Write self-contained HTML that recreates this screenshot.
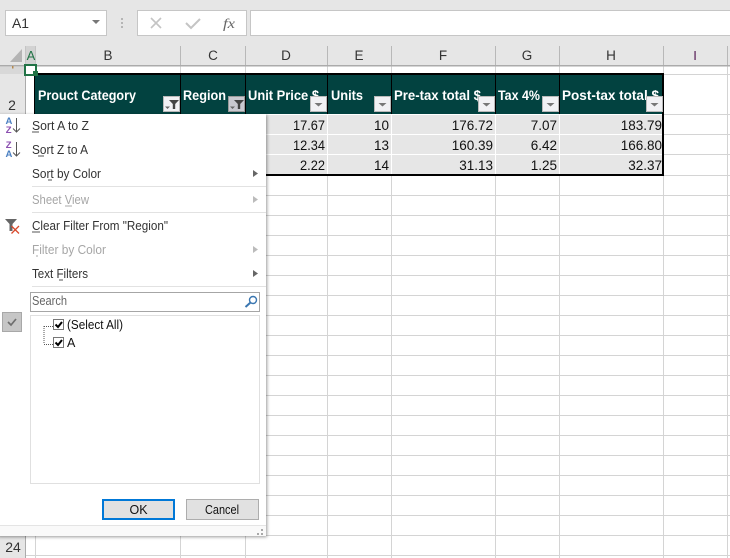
<!DOCTYPE html>
<html><head><meta charset="utf-8"><style>
html,body{margin:0;padding:0;width:730px;height:558px;overflow:hidden;background:#fff}
svg{display:block;font-family:"Liberation Sans",sans-serif}
.h{fill:#fff;font-weight:bold;font-size:13.5px}
.d{fill:#111;font-size:13.5px;text-anchor:end}
.c{fill:#333;font-size:13.5px;text-anchor:middle}
.m{fill:#333;font-size:12.5px}
.g{fill:#a6a6a6;font-size:12.5px}
</style></head><body>
<svg width="730" height="558" viewBox="0 0 730 558" xmlns="http://www.w3.org/2000/svg">
<defs>
<g id="btn"><rect x="0.5" y="0.5" width="16" height="15" fill="#f1f1f4" stroke="#b9b9b9"/><path d="M4.500 7h8l-4 3.500z" fill="#777"/></g>
<g id="fil"><path d="M6 4h10l-3.800 4v5h-2.400v-5z" fill="#444"/><path d="M2 10.500h5l-2.500 2.500z" fill="#666"/></g>
<filter id="sh" x="-5%" y="-5%" width="110%" height="110%"><feDropShadow dx="1" dy="1" stdDeviation="1.500" flood-color="#000" flood-opacity=".4"/></filter>
</defs>
<rect width="730" height="66" fill="#e6e6e6"/>
<rect x="0" y="66" width="25" height="492" fill="#e6e6e6"/>
<!-- grid -->
<g stroke="#d4d4d4" fill="none">
<path d="M35.500 66V558M180.500 66V558M245.500 66V558M327.500 66V558M391.500 66V558M495.500 66V558M559.500 66V558M663.500 66V558M727.500 66V558"/>
<path d="M25 74.500H730M25 114.500H730M25 134.500H730M25 154.500H730M25 175.500H730M25 195.500H730M25 215.500H730M25 235.500H730M25 255.500H730M25 275.500H730M25 295.500H730M25 315.500H730M25 335.500H730M25 355.500H730M25 375.500H730M25 395.500H730M25 415.500H730M25 435.500H730M25 455.500H730M25 475.500H730M25 495.500H730M25 515.500H730M25 535.500H730M25 555.500H730"/>
</g>
<!-- formula bar -->
<rect x="5.500" y="10.500" width="101" height="25" fill="#fff" stroke="#c6c6c6"/>
<text x="12" y="28" font-size="14" fill="#333" textLength="17" lengthAdjust="spacingAndGlyphs">A1</text>
<path d="M92 20h8l-4 4z" fill="#777"/>
<g fill="#b5b5b5"><rect x="121" y="18" width="2" height="2"/><rect x="121" y="22" width="2" height="2"/><rect x="121" y="26" width="2" height="2"/></g>
<rect x="137.500" y="10.500" width="109" height="25" fill="#fff" stroke="#c6c6c6"/>
<path d="M151 18l10 10M161 18l-10 10" stroke="#c4c4c4" stroke-width="1.600" fill="none"/>
<path d="M186 23l5 5 9-9" stroke="#c4c4c4" stroke-width="2" fill="none"/>
<text x="223" y="28" font-size="14" font-family="Liberation Serif" font-style="italic" fill="#666" textLength="12" lengthAdjust="spacingAndGlyphs">fx</text>
<rect x="250.500" y="10.500" width="480" height="25" fill="#fff" stroke="#c6c6c6"/>
<!-- column headers -->
<path d="M10 62L22 49V62z" fill="#b4b4b4"/>
<rect x="25" y="46" width="10" height="19" fill="#d2d2d2"/>
<path d="M180.500 46V65M245.500 46V65M327.500 46V65M391.500 46V65M495.500 46V65M559.500 46V65M663.500 46V65M727.500 46V65" stroke="#b8b8b8"/>
<path d="M25.500 46V65M35.500 46V65" stroke="#c4c4c4"/>
<rect x="0" y="65" width="730" height="1.500" fill="#ababab"/>
<text x="31" y="60" font-size="13" fill="#217346" text-anchor="middle">A</text>
<text class="c" x="108" y="60">B</text><text class="c" x="213" y="60">C</text><text class="c" x="286" y="60">D</text><text class="c" x="359" y="60">E</text><text class="c" x="443" y="60">F</text><text class="c" x="527" y="60">G</text><text class="c" x="611" y="60">H</text><text x="695" y="60" font-size="13" fill="#551a55" text-anchor="middle">I</text>
<!-- row headers -->
<rect x="0" y="67" width="25" height="7" fill="#d8d8d8"/>
<rect x="12" y="66" width="1.500" height="2.500" fill="#b58a50"/>
<rect x="25" y="66" width="1" height="492" fill="#ababab"/>
<text x="12" y="110" font-size="14" fill="#333" text-anchor="middle">2</text>
<!-- table -->
<rect x="34" y="73" width="630" height="41" fill="#024240"/>
<rect x="34" y="115" width="630" height="60" fill="#e6e6e6"/>
<path d="M36 134.500H662M36 154.500H662M327.500 115V174M391.500 115V174M495.500 115V174M559.500 115V174M245.500 115V174" stroke="#fff"/>
<path d="M34 114.500H664" stroke="#fff"/>
<path d="M180.500 74V114M245.500 74V114M327.500 74V114M391.500 74V114M495.500 74V114M559.500 74V114" stroke="#000"/>
<rect x="34" y="73" width="630" height="2" fill="#000"/><rect x="34" y="73" width="1" height="41" fill="#000"/>
<rect x="662" y="73" width="2" height="103" fill="#000"/><rect x="34" y="174" width="630" height="2" fill="#000"/>
<text class="h" x="38" y="100" textLength="98" lengthAdjust="spacingAndGlyphs">Prouct Category</text>
<text class="h" x="183" y="100" textLength="43" lengthAdjust="spacingAndGlyphs">Region</text>
<text class="h" x="248" y="100" textLength="71" lengthAdjust="spacingAndGlyphs">Unit Price $</text>
<text class="h" x="331" y="100" textLength="32" lengthAdjust="spacingAndGlyphs">Units</text>
<text class="h" x="394" y="100" textLength="87" lengthAdjust="spacingAndGlyphs">Pre-tax total $</text>
<text class="h" x="498" y="100" textLength="42" lengthAdjust="spacingAndGlyphs">Tax 4%</text>
<text class="h" x="562" y="100" textLength="97" lengthAdjust="spacingAndGlyphs">Post-tax total $</text>
<g transform="translate(163,96)"><rect x=".5" y=".5" width="16" height="15" fill="#f1f1f4" stroke="#b9b9b9"/><use href="#fil"/></g>
<g transform="translate(228,96)"><rect x=".5" y=".5" width="16" height="15" fill="#c9c9d0" stroke="#999"/><use href="#fil"/></g>
<use href="#btn" x="310" y="96"/><use href="#btn" x="374" y="96"/><use href="#btn" x="478" y="96"/><use href="#btn" x="542" y="96"/><use href="#btn" x="646" y="96"/>
<text class="d" x="325" y="130" textLength="32" lengthAdjust="spacingAndGlyphs">17.67</text><text class="d" x="325" y="150" textLength="32" lengthAdjust="spacingAndGlyphs">12.34</text><text class="d" x="325" y="170" textLength="25" lengthAdjust="spacingAndGlyphs">2.22</text>
<text class="d" x="389" y="130">10</text><text class="d" x="389" y="150">13</text><text class="d" x="389" y="170">14</text>
<text class="d" x="493" y="130">176.72</text><text class="d" x="493" y="150">160.39</text><text class="d" x="493" y="170">31.13</text>
<text class="d" x="557" y="130">7.07</text><text class="d" x="557" y="150">6.42</text><text class="d" x="557" y="170">1.25</text>
<text class="d" x="662" y="130">183.79</text><text class="d" x="662" y="150">166.80</text><text class="d" x="662" y="170">32.37</text>
<!-- selection -->
<rect x="25" y="65" width="11" height="10" fill="#fff" stroke="#217346" stroke-width="2"/>
<rect x="33" y="71" width="5" height="5" fill="#217346"/>
<!-- row 24 -->
<text x="13" y="552" font-size="14" fill="#333" text-anchor="middle">24</text>
<!-- menu -->
<rect x="-3" y="114" width="269" height="422" fill="#fff" filter="url(#sh)"/>
<path d="M32 186.500H266M32 212.500H266M32 286.500H266" stroke="#e2e2e2"/>
<path d="M0 525.500H266" stroke="#e4e4e4"/><rect x="0" y="526" width="266" height="10" fill="#f9f9f9"/>
<g fill="#a8a8a8"><rect x="261" y="529" width="2" height="2"/><rect x="257" y="533" width="2" height="2"/><rect x="261" y="533" width="2" height="2"/></g>
<!-- sort icons -->
<text x="5.500" y="124" font-size="9.500" font-weight="bold" fill="#4a7fc1">A</text>
<text x="5.800" y="133" font-size="9.500" font-weight="bold" fill="#8b4fb0">Z</text>
<path d="M16.500 118V132M13 128.500l3.500 3.500 3.500-3.500" stroke="#555" fill="none"/>
<text x="5.800" y="148" font-size="9.500" font-weight="bold" fill="#8b4fb0">Z</text>
<text x="5.500" y="157" font-size="9.500" font-weight="bold" fill="#4a7fc1">A</text>
<path d="M16.500 142V156M13 152.500l3.500 3.500 3.500-3.500" stroke="#555" fill="none"/>
<text class="m" x="32" y="130" textLength="57" lengthAdjust="spacingAndGlyphs">Sort A to Z</text>
<text class="m" x="32" y="154" textLength="56" lengthAdjust="spacingAndGlyphs">Sort Z to A</text>
<text class="m" x="32" y="178" textLength="69" lengthAdjust="spacingAndGlyphs">Sort by Color</text>
<text class="g" x="32" y="204" textLength="57" lengthAdjust="spacingAndGlyphs">Sheet View</text>
<text class="m" x="32" y="230" textLength="136" lengthAdjust="spacingAndGlyphs">Clear Filter From "Region"</text>
<text class="g" x="32" y="254" textLength="74" lengthAdjust="spacingAndGlyphs">Filter by Color</text>
<text class="m" x="32" y="278" textLength="56" lengthAdjust="spacingAndGlyphs">Text Filters</text>
<path d="M32 132H39M38 156H44M48 180H52M32 232H40M59 280H63" stroke="#555"/>
<path d="M65 206H72M36 256H38" stroke="#aaa"/>
<path d="M253 170v7l5-3.500z" fill="#666"/><path d="M253 196v7l5-3.500z" fill="#bbb"/><path d="M253 246v7l5-3.500z" fill="#bbb"/><path d="M253 270v7l5-3.500z" fill="#666"/>
<path d="M5 219h12l-4.500 5v7h-3v-7z" fill="#666"/>
<path d="M11.500 226l7.500 7.500M19 226l-7.500 7.500" stroke="#d9482b" stroke-width="1.300"/>
<!-- search -->
<rect x="30.500" y="292.500" width="229" height="19" fill="#fff" stroke="#a6a6a6"/>
<text x="32" y="305" font-size="12.500" fill="#666" textLength="35" lengthAdjust="spacingAndGlyphs">Search</text>
<circle cx="253" cy="300" r="3.500" fill="none" stroke="#3a76b0" stroke-width="1.400"/><path d="M250.500 302.500L245.500 307" stroke="#3a76b0" stroke-width="2"/>
<!-- left check -->
<rect x="2.500" y="312.500" width="19" height="19" fill="#c6c6c6" stroke="#a8a8a8"/>
<path d="M8 322l3 3 5-6" stroke="#6e6e6e" stroke-width="1.700" fill="none"/>
<!-- list -->
<rect x="30.500" y="315.500" width="229" height="168" fill="#fff" stroke="#e0e0e0"/>
<path d="M44 326.500H53M44 326V344M44 344.500H53" stroke="#555" stroke-dasharray="1 1" fill="none"/>
<rect x="53.500" y="319.500" width="10" height="10" fill="#fff" stroke="#777"/>
<path d="M55.500 324.500l2.500 2.500 4-5" stroke="#000" stroke-width="2" fill="none"/>
<rect x="53.500" y="337.500" width="10" height="10" fill="#fff" stroke="#777"/>
<path d="M55.500 342.500l2.500 2.500 4-5" stroke="#000" stroke-width="2" fill="none"/>
<text x="67" y="329" font-size="12.500" fill="#111" textLength="56" lengthAdjust="spacingAndGlyphs">(Select All)</text>
<text x="67" y="347" font-size="12.500" fill="#111">A</text>
<!-- buttons -->
<rect x="103" y="500" width="71" height="19" fill="#e1e1e1" stroke="#0078d7" stroke-width="2"/>
<text x="138.500" y="514" font-size="12.500" fill="#111" text-anchor="middle">OK</text>
<rect x="186.500" y="499.500" width="72" height="20" fill="#e1e1e1" stroke="#adadad"/>
<text x="222" y="514" font-size="12.500" fill="#111" text-anchor="middle" textLength="34" lengthAdjust="spacingAndGlyphs">Cancel</text>
</svg>
</body></html>
